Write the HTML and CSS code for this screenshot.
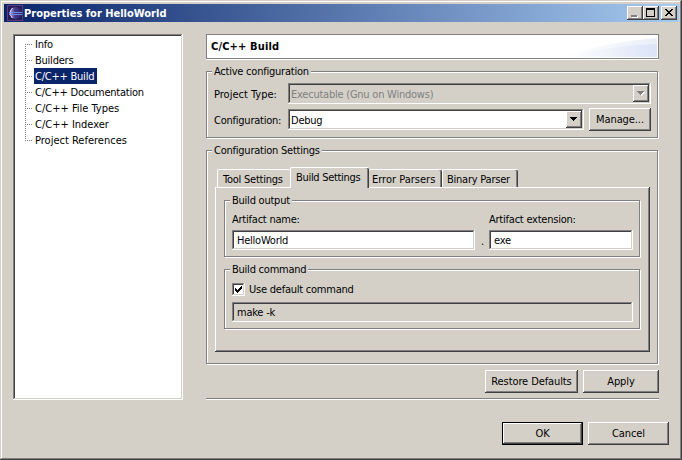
FILE: index.html
```html
<!DOCTYPE html>
<html lang="en">
<head>
<meta charset="utf-8">
<title>Properties for HelloWorld</title>
<link rel="stylesheet" href="styles.css">
</head>
<body>
<div class="window">
  <header class="titlebar">
    <svg class="app-icon" width="16" height="16" viewBox="0 0 16 16">
      <defs>
        <linearGradient id="ball" x1="0" x2="1"><stop offset="0" stop-color="#b0a8dc"/><stop offset=".45" stop-color="#443a8c"/><stop offset="1" stop-color="#2c2468"/></linearGradient>
      </defs>
      <rect width="16" height="16" fill="#54407c"/>
      <rect x="1" y="1" width="14" height="14" fill="#2a1c58"/>
      <circle cx="8.500" cy="8" r="6" fill="url(#ball)"/>
      <path d="M5.500 3Q1 8 5.500 13" fill="none" stroke="#dcd4f0" stroke-width="1"/>
      <path d="M2 7.500H15M2 9.500H15" stroke="#7494ec" stroke-width=".9"/>
    </svg>
    <h1 class="title">Properties for HelloWorld</h1>
    <div class="window-buttons">
      <button class="raised wb" aria-label="Minimize"><svg width="12" height="10" viewBox="0 0 12 10" shape-rendering="crispEdges"><path d="M3 8h6v2H3z" fill="#fff"/><path d="M2 7h6v2H2z" fill="#808080"/></svg></button>
      <button class="raised wb" aria-label="Maximize"><svg width="12" height="10" viewBox="0 0 12 10" shape-rendering="crispEdges"><path d="M1 0h9v9H1zM2 2v6h7V2z" fill="#000" fill-rule="evenodd"/></svg></button>
      <button class="raised wb close" aria-label="Close"><svg width="12" height="10" viewBox="0 0 12 10" shape-rendering="crispEdges"><path d="M2 1h2v1h1v1h2V2h1V1h2v1H9v1H8v1H7v1h1v1h1v1h1v1H8V7H7V6H5v1H4v1H2V7h1V6h1V5h1V4H4V3H3V2H2z"/></svg></button>
    </div>
  </header>

  <div class="content">
    <ul class="tree sunken">
      <li><span>Info</span></li>
      <li><span>Builders</span></li>
      <li><span class="selected">C/C++ Build</span></li>
      <li><span>C/C++ Documentation</span></li>
      <li><span class="wide">C/C++ File Types</span></li>
      <li><span class="wide">C/C++ Indexer</span></li>
      <li><span class="wide">Project References</span></li>
    </ul>

    <main class="page">
      <div class="heading">
        <h2>C/C++ Build</h2>
        <svg class="swoosh" width="90" height="20" viewBox="0 0 90 20">
          <defs><linearGradient id="sw"><stop offset="0" stop-color="#fff"/><stop offset="1" stop-color="#dbe3f6"/></linearGradient></defs>
          <path d="M0 18Q40 4 90 0V19H0z" fill="url(#sw)" opacity=".6"/>
          <path d="M0 19Q45 7 90 6V19z" fill="url(#sw)"/>
        </svg>
      </div>

      <section class="group active-config">
        <h3 class="legend">Active configuration</h3>
        <div class="row">
          <label class="wide">Project Type:</label>
          <div class="combo sunken disabled"><span>Executable (Gnu on Windows)</span><i class="raised arrow"><svg width="8" height="5" viewBox="0 0 8 5" shape-rendering="crispEdges"><path d="M1 1h7v1H7v1H6v1H5v1H4V4H3V3H2V2H1z" fill="#fff"/><path d="M0 0h7v1H6v1H5v1H4v1H3V3H2V2H1V1H0z" fill="#808080"/></svg></i></div>
        </div>
        <div class="row second">
          <label>Configuration:</label>
          <div class="combo sunken"><span>Debug</span><i class="raised arrow"><svg width="8" height="5" viewBox="0 0 8 5" shape-rendering="crispEdges"><path d="M0 0h7v1H6v1H5v1H4v1H3V3H2V2H1V1H0z"/></svg></i></div>
          <button class="raised manage">Manage...</button>
        </div>
      </section>

      <section class="group settings">
        <h3 class="legend">Configuration Settings</h3>
        <nav class="tabs">
          <span class="tab tool">Tool Settings</span>
          <span class="tab build">Build Settings</span>
          <span class="tab error wide">Error Parsers</span>
          <span class="tab binary">Binary Parser</span>
        </nav>
        <div class="panel">
          <section class="group output">
            <h3 class="legend">Build output</h3>
            <div class="fields">
              <label>Artifact name:</label><span></span><label>Artifact extension:</label>
              <div class="input sunken">HelloWorld</div><span class="dot">.</span><div class="input sunken">exe</div>
            </div>
          </section>
          <section class="group command">
            <h3 class="legend">Build command</h3>
            <div class="check"><i class="box sunken"><svg width="9" height="9" viewBox="0 0 9 9" shape-rendering="crispEdges"><path d="M1 3h1v1h1v1h1V4h1V3h1V2h1V1h1v3H7v1H6v1H5v1H4v1H3V7H2V6H1z"/></svg></i><span>Use default command</span></div>
            <div class="input sunken disabled-input">make -k</div>
          </section>
        </div>
      </section>

      <div class="page-buttons">
        <button class="raised restore">Restore Defaults</button>
        <button class="raised apply">Apply</button>
      </div>
      <div class="rule"></div>
    </main>
  </div>

  <footer class="dialog-buttons">
    <div class="default"><button class="raised">OK</button></div>
    <button class="raised">Cancel</button>
  </footer>
</div>
</body>
</html>
```
FILE: styles.css
```css
* { box-sizing: border-box; }
body {
  margin: 0;
  font: 11px/14px "DejaVu Sans Condensed", "DejaVu Sans", sans-serif;
  font-stretch: condensed;
  letter-spacing: -.23px;
  color: #000;
}
h1, h2, h3, ul { margin: 0; padding: 0; font-size: 11px; line-height: 14px; font-weight: normal; list-style: none; }
button { font: inherit; color: inherit; letter-spacing: -.1px; padding: 0; margin: 0; border-radius: 0; white-space: nowrap; }
span, label { white-space: nowrap; }
.wide { letter-spacing: 0; }

.window {
  width: 682px;
  height: 460px;
  background: #d4d0c8;
  padding: 4px 3px 0 4px;
  box-shadow: inset -1px -1px #404040, inset 1px 1px #d4d0c8, inset -2px -2px #808080, inset 2px 2px #fff;
}
.raised {
  background: #d4d0c8;
  border: 0;
  box-shadow: inset -1px -1px #404040, inset 1px 1px #fff, inset -2px -2px #808080;
}
.sunken {
  border: 0;
  box-shadow: inset -1px -1px #fff, inset 1px 1px #808080, inset -2px -2px #d4d0c8, inset 2px 2px #404040;
}

.titlebar {
  height: 18px;
  display: flex;
  align-items: center;
  padding: 0 2px 0 3px;
  background: linear-gradient(90deg, #0a246a, #a6caf0);
}
.app-icon { flex: none; }
.title { color: #fff; font-weight: bold; flex: 1; padding: 1px 0 0 1px; letter-spacing: 0; }
.window-buttons { display: flex; }
.wb { width: 16px; height: 14px; display: grid; place-items: center; }
.wb svg { display: block; }
.close { margin-left: 2px; }

.content { display: flex; gap: 23px; padding: 12px 0 0 9px; }
.tree { width: 170px; height: 366px; background: #fff; padding: 2px 2px 0 12px; }
.tree li {
  height: 16px;
  display: flex;
  align-items: center;
  background:
    repeating-linear-gradient(90deg, #808080 0 1px, transparent 1px 2px) 0 8px / 8px 1px no-repeat,
    repeating-linear-gradient(180deg, #808080 0 1px, transparent 1px 2px) 0 0 / 1px 100% no-repeat;
}
.tree li:first-child { background-position: 0 8px, 0 8px; }
.tree li:last-child { background-size: 8px 1px, 1px 8px; }
.tree span { margin-left: 9px; padding: 1px 2px 0 1px; line-height: 15px; }
.tree .selected { background: #0a246a; color: #fff; width: 63px; }

.page { width: 453px; }
.heading {
  height: 25px;
  border: 1px solid #808080;
  box-shadow: 0 1px #fff;
  background: #fff;
  display: flex;
  justify-content: space-between;
  align-items: center;
  padding: 0 1px 0 4px;
}
.heading h2 { font-weight: bold; letter-spacing: .15px; padding-top: 1px; }
.swoosh { align-self: flex-end; }

.group {
  border: 1px solid #808080;
  box-shadow: 1px 1px #fff, inset 1px 1px #fff;
}
.legend { width: max-content; background: #d4d0c8; margin: -7px 0 0 5px; padding: 0 2px; height: 13px; position: relative; }
.active-config { width: 452px; height: 67px; margin-top: 12px; }
.row { display: flex; align-items: center; padding-left: 7px; height: 23px; margin-top: 4px; }
.row.second { margin-top: 3px; }
.row label { width: 74px; padding-top: 2px; }
.combo { flex: none; width: 296px; height: 21px; background: #fff; display: flex; justify-content: space-between; align-items: center; padding: 0 2px 0 3px; }
.combo span { padding-top: 2px; }
.combo.disabled { width: 363px; background: #d4d0c8; color: #808080; }
.arrow { width: 16px; height: 17px; display: grid; place-items: center; }
.arrow svg { display: block; }
.manage { width: 62px; height: 23px; margin-left: 5px; }

.settings { width: 452px; height: 214px; margin-top: 12px; }
.tabs { display: flex; align-items: flex-end; height: 21px; margin: 10px 0 0 10px; position: relative; }
.tab {
  height: 18px;
  margin-bottom: 1px;
  border: solid #fff;
  border-width: 1px 0 0 1px;
  border-radius: 2px 2px 0 0;
  box-shadow: inset -1px 0 #404040, inset -2px 0 #808080;
  padding: 3px 0 0 5px;
}
.tool { width: 73px; box-shadow: none; }
.build { width: 79px; height: 21px; margin-bottom: 0; background: #d4d0c8; letter-spacing: -.3px; }
.error { width: 73px; padding-left: 3px; border-left: 0; }
.binary { width: 76px; padding-left: 4px; }
.panel {
  width: 435px;
  height: 165px;
  margin: -1px 0 0 8px;
  box-shadow: inset -1px -1px #404040, inset 1px 1px #fff, inset -2px -2px #808080;
  padding: 13px 0 0 9px;
}
.output { width: 416px; height: 57px; }
.fields {
  display: grid;
  grid-template-columns: 243px 14px 144px;
  grid-template-rows: 17px 20px;
  padding: 6px 0 0 7px;
}
.input { background: #fff; height: 20px; padding: 4px 5px 2px; }
.dot { padding: 5px 0 0 6px; }
.command { width: 416px; height: 60px; margin-top: 12px; }
.check { display: flex; align-items: center; height: 14px; padding-left: 7px; margin-top: 6px; gap: 4px; }
.check span { padding-top: 1px; }
.box { width: 13px; height: 13px; background: #fff; padding: 2px; }
.box svg { display: block; }
.disabled-input { width: 401px; margin: 6px 0 0 7px; background: #d4d0c8; }

.page-buttons { display: flex; justify-content: flex-end; gap: 5px; margin-top: 6px; }
.page-buttons button { height: 23px; }
.restore { width: 93px; }
.apply { width: 76px; }
.rule { height: 2px; margin-top: 5px; background: linear-gradient(#808080 50%, #fff 50%); }

.dialog-buttons { display: flex; justify-content: flex-end; gap: 5px; padding: 22px 10px 0 0; }
.dialog-buttons button { width: 81px; height: 23px; }
.default { background: #000; padding: 1px; width: 81px; height: 23px; }
.dialog-buttons .default button { width: 79px; height: 21px; display: block; }
```
